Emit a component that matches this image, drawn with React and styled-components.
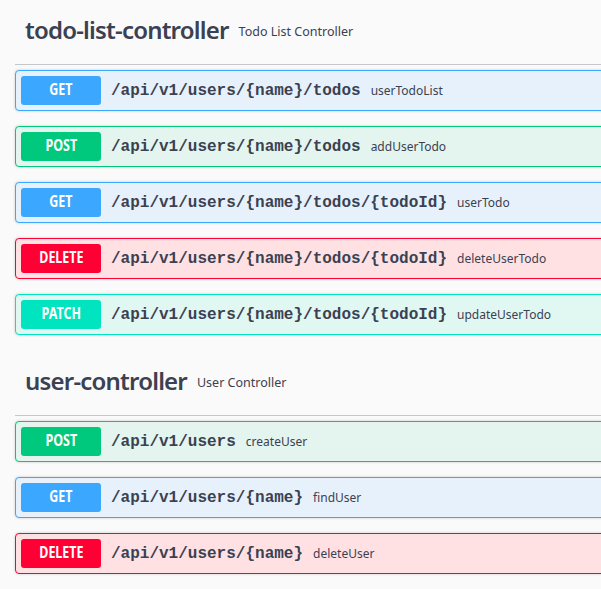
import styled, { createGlobalStyle } from 'styled-components';

const GlobalStyle = createGlobalStyle`
  html, body {
    margin: 0;
    padding: 0;
    background: #fafafa;
    overflow: hidden;
  }
`;

const methods = {
  get: { color: '#3ba7ff', bg: '#e7f1fb' },
  post: { color: '#00c87d', bg: '#e3f5ee' },
  delete: { color: '#ff0034', bg: '#ffe1e4' },
  patch: { color: '#00e4bf', bg: '#e1f7f2' },
};

const Wrapper = styled.div`
  width: 900px;
  padding: 0 15px;
  font-family: 'Noto Sans', 'Open Sans', sans-serif;
  color: #3b4151;
`;

const Section = styled.section`
  padding-bottom: 1px;
`;

const TagHeading = styled.h3`
  margin: 0 0 5px;
  padding: 0 10px 5px;
  box-sizing: border-box;
  height: 65px;
  display: flex;
  align-items: center;
  border-bottom: 1px solid #c4c6cb;
  font-size: 24px;
  font-weight: 600;
  letter-spacing: -0.8px;
  color: #3b4151;

  & small {
    margin-left: 10px;
    padding-top: 3px;
    font-size: 12.5px;
    font-weight: 400;
    letter-spacing: 0;
  }
`;

const OpBlock = styled.div`
  display: flex;
  align-items: center;
  margin-bottom: 15px;
  padding: 5px;
  border: 1px solid ${props => methods[props.method].color};
  border-radius: 4px;
  background: ${props => methods[props.method].bg};
  box-shadow: 0 0 3px rgba(0, 0, 0, 0.19);
`;

const Method = styled.span`
  width: 80px;
  height: 29px;
  box-sizing: border-box;
  padding-bottom: 3px;
  display: flex;
  align-items: center;
  justify-content: center;
  border-radius: 3px;
  background: ${props => methods[props.method].color};
  color: #fff;
  font-size: 16px;
  font-weight: 700;
  text-transform: uppercase;

  & span {
    display: inline-block;
    transform: scaleX(0.78);
  }
`;

const Path = styled.span`
  padding: 0 10px;
  font-family: 'Liberation Mono', 'Courier New', monospace;
  font-size: 16px;
  font-weight: 700;
  color: #3b4151;
`;

const Summary = styled.span`
  font-size: 12px;
  color: #3b4151;
`;

const tags = [
  {
    name: 'todo-list-controller',
    desc: 'Todo List Controller',
    ops: [
      ['get', '/api/v1/users/{name}/todos', 'userTodoList'],
      ['post', '/api/v1/users/{name}/todos', 'addUserTodo'],
      ['get', '/api/v1/users/{name}/todos/{todoId}', 'userTodo'],
      ['delete', '/api/v1/users/{name}/todos/{todoId}', 'deleteUserTodo'],
      ['patch', '/api/v1/users/{name}/todos/{todoId}', 'updateUserTodo'],
    ],
  },
  {
    name: 'user-controller',
    desc: 'User Controller',
    ops: [
      ['post', '/api/v1/users', 'createUser'],
      ['get', '/api/v1/users/{name}', 'findUser'],
      ['delete', '/api/v1/users/{name}', 'deleteUser'],
    ],
  },
];

const App = () => (
  <>
    <GlobalStyle />
    <Wrapper>
      {tags.map(tag => (
        <Section key={tag.name}>
          <TagHeading>
            <span>{tag.name}</span>
            <small>{tag.desc}</small>
          </TagHeading>
          {tag.ops.map(([method, path, summary]) => (
            <OpBlock method={method} key={method + path}>
              <Method method={method}>
                <span>{method}</span>
              </Method>
              <Path>{path}</Path>
              <Summary>{summary}</Summary>
            </OpBlock>
          ))}
        </Section>
      ))}
    </Wrapper>
  </>
);

export default App;
